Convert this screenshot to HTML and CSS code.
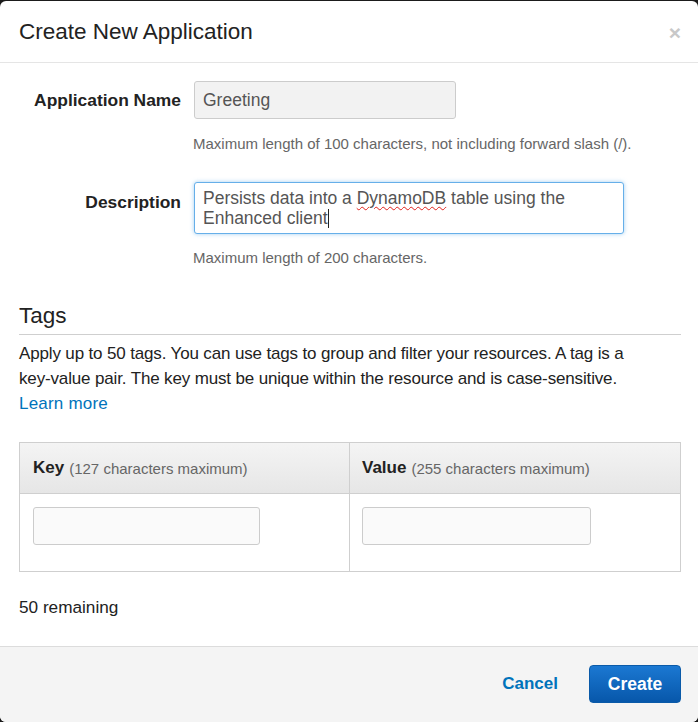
FILE: index.html
```html
<!DOCTYPE html>
<html>
<head>
<meta charset="utf-8">
<link rel="stylesheet" href="styles.css">
</head>
<body>
<div class="modal">
  <div class="modal-header">
    <h1 class="title">Create New Application</h1>
    <span class="close">&times;</span>
  </div>
  <div class="modal-body">
    <div class="form-row row-name">
      <label class="label">Application Name</label>
      <div class="field">
        <div class="input input-disabled">Greeting</div>
        <div class="help help-name">Maximum length of 100 characters, not including forward slash (/).</div>
      </div>
    </div>
    <div class="form-row row-desc">
      <label class="label label-top">Description</label>
      <div class="field">
        <div class="textarea">Persists data into a <span class="spell">DynamoDB</span> table using the Enhanced client<span class="caret"></span></div>
        <div class="help help-desc">Maximum length of 200 characters.</div>
      </div>
    </div>
    <h2 class="section-title">Tags</h2>
    <p class="tags-text">Apply up to 50 tags. You can use tags to group and filter your resources. A tag is a <span class="nowrap">key-value</span> pair. The key must be unique within the resource and is <span class="nowrap">case-sensitive.</span><br><a class="link" href="#">Learn more</a></p>
    <div class="tag-table">
      <div class="th"><b>Key</b> <span class="muted">(127 characters maximum)</span></div>
      <div class="th"><b>Value</b> <span class="muted">(255 characters maximum)</span></div>
      <div class="td"><div class="tag-input"></div></div>
      <div class="td"><div class="tag-input"></div></div>
    </div>
    <div class="remaining">50 remaining</div>
  </div>
  <div class="modal-footer">
    <a class="cancel" href="#">Cancel</a>
    <button class="btn-create">Create</button>
  </div>
</div>
</body>
</html>
```

FILE: styles.css
```css
html, body {
  margin: 0;
  padding: 0;
  background: #1b1b1b;
  height: 100%;
  overflow: hidden;
}
body {
  font-family: "Liberation Sans", Arial, sans-serif;
  color: #222;
  padding-top: 1px;
}
.modal {
  width: 698px;
  height: 721px;
  background: #fff;
  border-radius: 6px;
  overflow: hidden;
  display: flex;
  flex-direction: column;
}
.modal-header {
  height: 61px;
  border-bottom: 1px solid #e5e5e5;
  display: flex;
  align-items: center;
  justify-content: space-between;
  padding: 0 17px 0 19px;
}
.title {
  margin: 0;
  font-size: 22.5px;
  font-weight: normal;
  color: #222;
  line-height: 26px;
}
.close {
  font-size: 21px;
  font-weight: bold;
  color: #c8c8c8;
  line-height: 20px;
  margin-top: 2px;
}
.modal-body {
  flex: 1;
  padding: 0 17px 0 19px;
}
.form-row {
  display: flex;
  gap: 13px;
}
.row-name {
  margin-top: 18px;
  align-items: flex-start;
}
.row-desc {
  margin-top: 28px;
}
.label {
  width: 162px;
  text-align: right;
  font-weight: bold;
  font-size: 17.4px;
  line-height: 38px;
  color: #222;
  white-space: nowrap;
}
.label-top {
  line-height: 20px;
  padding-top: 10px;
}
.field {
  display: flex;
  flex-direction: column;
}
.input {
  box-sizing: border-box;
  width: 262px;
  height: 38px;
  border: 1px solid #cccccc;
  border-radius: 3px;
  font-size: 17.5px;
  line-height: 36px;
  padding: 0 8px;
  color: #555;
}
.input-disabled {
  background: #f2f2f2;
}
.help {
  font-size: 15px;
  line-height: 20px;
  color: #666;
  margin-left: -1px;
  white-space: nowrap;
}
.help-name {
  margin-top: 15px;
}
.help-desc {
  margin-top: 14px;
}
.textarea {
  box-sizing: border-box;
  width: 430px;
  height: 52px;
  border: 1px solid #66afe9;
  border-radius: 3px;
  box-shadow: 0 0 4px rgba(102, 175, 233, 0.6);
  font-size: 17.5px;
  line-height: 20px;
  padding: 5px 8px;
  color: #555;
  background: #fff;
}
.spell {
  text-decoration: underline wavy #e0201a;
  text-decoration-thickness: 1px;
  text-underline-offset: 2px;
}
.caret {
  display: inline-block;
  width: 1px;
  height: 19px;
  background: #222;
  vertical-align: -4px;
}
.section-title {
  margin: 35px 0 0;
  font-size: 22.5px;
  font-weight: normal;
  line-height: 26px;
  color: #222;
  padding-bottom: 5px;
  border-bottom: 1px solid #cfcfcf;
}
.tags-text {
  margin: 6px 0 0;
  font-size: 17px;
  letter-spacing: -0.15px;
  line-height: 25px;
  color: #222;
}
.nowrap {
  white-space: nowrap;
}
.link {
  color: #0073bb;
  text-decoration: none;
  letter-spacing: 0.2px;
}
.tag-table {
  margin-top: 26px;
  display: grid;
  grid-template-columns: 329px 1fr;
  border: 1px solid #cfcfcf;
}
.th {
  height: 51px;
  box-sizing: border-box;
  border-bottom: 1px solid #cfcfcf;
  background: linear-gradient(#f4f4f4, #e6e6e6);
  display: flex;
  align-items: center;
  padding-left: 13px;
  font-size: 17px;
  color: #222;
  white-space: nowrap;
}
.th b {
  margin-right: 5px;
}
.th + .th,
.td + .td {
  border-left: 1px solid #cfcfcf;
  padding-left: 12px;
}
.td {
  height: 77px;
  padding: 13px 0 0 13px;
  box-sizing: border-box;
}
.muted {
  color: #666;
  font-size: 15px;
}
.tag-input {
  width: 227px;
  height: 38px;
  box-sizing: border-box;
  border: 1px solid #cccccc;
  border-radius: 3px;
  background: #fafafa;
}
.td + .td .tag-input {
  width: 229px;
}
.remaining {
  margin-top: 25px;
  font-size: 17.2px;
  line-height: 20px;
  color: #222;
}
.modal-footer {
  flex: none;
  height: 76px;
  box-sizing: border-box;
  border-top: 1px solid #dcdcdc;
  background: #f4f4f4;
  display: flex;
  justify-content: flex-end;
  align-items: flex-start;
  padding: 18px 17px 0 0;
}
.cancel {
  color: #0073bb;
  font-weight: bold;
  font-size: 17px;
  text-decoration: none;
  line-height: 38px;
  margin-right: 31px;
}
.btn-create {
  width: 92px;
  height: 38px;
  border: 1px solid #0a5aa8;
  border-radius: 4px;
  background: linear-gradient(#1b78d2, #0757aa);
  color: #fff;
  font-family: "Liberation Sans", Arial, sans-serif;
  font-weight: bold;
  font-size: 17.5px;
  padding: 0;
}
```
